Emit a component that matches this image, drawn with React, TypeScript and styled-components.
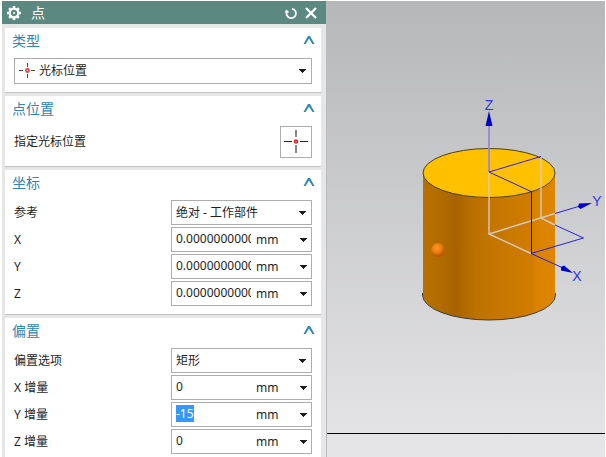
import React, { useEffect, useId, useRef } from "react";
import styled, { createGlobalStyle } from "styled-components";

const GlobalStyle = createGlobalStyle`
  *, *::before, *::after { box-sizing: border-box; }
  body {
    margin: 0;
    background: #fff;
    color: #1e1e1e;
    font: 12px/18px "Noto Sans", "Noto Sans CJK SC", sans-serif;
  }
`;

const Workspace = styled.main`
  display: flex;
  height: 100vh;
  padding: 1px 1px 0 2px;
  overflow: hidden;
`;

const Dialog = styled.section`
  flex: none;
  width: 325px;
  background: #e6e6e6;
  border-right: 1px solid #b9bbbd;
`;

const TitleBar = styled.header`
  display: flex;
  align-items: center;
  height: 23px;
  padding: 0 5px 0 4px;
  background: #5b8880;
  color: #fff;
`;

const Title = styled.h1`
  flex: 1;
  margin: 0 0 0 9px;
  font-size: 14px;
  line-height: 20px;
  font-weight: 400;
`;

const IconButton = styled.button`
  display: grid;
  place-items: center;
  width: 20px;
  height: 20px;
  padding: 0;
  border: 0;
  background: none;
  color: inherit;
`;

const Groups = styled.div`
  display: flex;
  flex-direction: column;
  gap: 3px;
  padding: 4px 5px 0 3px;
`;

const Group = styled.section`
  padding: 0 9px 8px;
  background: #fff;
  border-bottom: 1px solid #c3c3c3;
`;

const GroupHeader = styled.header`
  display: flex;
  align-items: center;
  justify-content: space-between;
  height: 30px;
  margin: 0 -7px 0 -2px;
  padding-bottom: 4px;
`;

const GroupTitle = styled.h2`
  margin: 0;
  color: #2b87b8;
  font-size: 14px;
  line-height: 20px;
  font-weight: 400;
`;

const Rows = styled.div`
  display: grid;
  gap: 2px;
`;

const Row = styled.div`
  display: grid;
  grid-template-columns: 1fr 141px;
  align-items: center;
`;

const PickRow = styled.div`
  display: flex;
  align-items: center;
  justify-content: space-between;
`;

const Label = styled.label`
  white-space: nowrap;
`;

const PickButton = styled.button`
  display: grid;
  place-items: center;
  width: 32px;
  height: 32px;
  padding: 0;
  border: 1px solid #adadad;
  background: #fff;
`;

const Box = styled.div<{ $tall?: boolean }>`
  display: flex;
  align-items: center;
  gap: 4px;
  height: ${(p) => (p.$tall ? 26 : 25)}px;
  padding-left: 4px;
  border: 1px solid #adadad;
  background: #fff;
`;

const SelectCell = styled.div`
  display: grid;
  flex: 1;
  align-items: center;

  > * { grid-area: 1 / 1; }
  > svg { justify-self: end; pointer-events: none; }
`;

const Select = styled.select`
  width: 100%;
  height: 22px;
  padding: 0;
  border: 0;
  outline: 0;
  appearance: none;
  background: none;
  color: inherit;
  font: inherit;
`;

const Input = styled.input`
  width: 75px;
  height: 17px;
  margin: 0 1px 2px 0;
  padding: 0;
  border: 0;
  outline: 0;
  background: none;
  color: inherit;
  font: inherit;
  line-height: 17px;

  &::selection {
    background: rgba(51, 153, 255, 0.996);
    color: #fff;
  }
`;

const Viewport = styled.section`
  flex: 1;
  min-width: 0;
  background: linear-gradient(#b6b7b9, #e6e6e9);
`;

const Scene = styled.svg`
  display: block;
  width: 100%;
  height: 100%;
`;

const DropArrow = ({ inset }: { inset: number }) => (
  <svg width={7 + inset} height="4" shapeRendering="crispEdges" aria-hidden="true">
    <path d="M0 0h7v1h-1v1h-1v1h-1v1h-1v-1h-1v-1h-1v-1h-1z" fill="#1e1e1e" />
  </svg>
);

const Chevron = () => (
  <svg width="12" height="10" viewBox="0 0 12 10" aria-hidden="true">
    <path d="M0.500 8 5 0H7L11.500 8H9.400L6 2.400 2.600 8z" fill="#2b87b8" />
  </svg>
);

const GearIcon = () => (
  <svg width="16" height="16" viewBox="-8 -8 16 16" fill="none" stroke="#fff" aria-hidden="true">
    <circle r="4.4" strokeWidth="2.2" />
    <g strokeWidth="2.6">
      <path d="M0-7V-5M0 7V5M-7 0H-5M7 0H5" />
      <path d="M-4.8-4.8-3.6-3.6M4.8 4.8 3.6 3.6M-4.8 4.8-3.6 3.6M4.8-4.8 3.6-3.6" />
    </g>
    <circle r="1" fill="#fff" stroke="none" />
  </svg>
);

const ResetIcon = () => (
  <svg width="14" height="14" viewBox="0 0 14 14" fill="none" stroke="#fff" strokeWidth="1.8" aria-hidden="true">
    <path d="M8 2.800A4.700 4.700 0 1 1 3 5.500" />
    <path d="M0.500 6.500 2.500 3.500 5.500 6.500z" fill="#fff" stroke="none" />
  </svg>
);

const CloseIcon = () => (
  <svg width="12" height="12" viewBox="0 0 12 12" stroke="#fff" strokeWidth="2.3" aria-hidden="true">
    <path d="M1 1 11 11M11 1 1 11" />
  </svg>
);

const SmallCursorIcon = () => (
  <svg width="16" height="16" viewBox="0 0 16 16" fill="none" aria-hidden="true">
    <path d="M0 7.500H4M12 7.500H16M8.500 0V4M8.500 11V15" stroke="#444" />
    <circle cx="8.500" cy="7.500" r="1.7" stroke="#d4383c" strokeWidth="1.4" fill="#f3b5b5" />
  </svg>
);

const CursorIcon = () => (
  <svg width="24" height="24" viewBox="0 0 24 24" fill="none" aria-hidden="true">
    <path d="M0 11.500H8M16 11.500H24" stroke="#222" />
    <path d="M12 0V7M12 15V23" stroke="#888" strokeWidth="2" />
    <circle cx="12" cy="11.500" r="1.6" stroke="#d82a2e" strokeWidth="1.5" fill="#f08080" />
  </svg>
);

function Section({ title, children }: { title: string; children: React.ReactNode }) {
  return (
    <Group>
      <GroupHeader>
        <GroupTitle>{title}</GroupTitle>
        <IconButton type="button" aria-label={`收起${title}`}>
          <Chevron />
        </IconButton>
      </GroupHeader>
      {children}
    </Group>
  );
}

function OptionRow({ label, value }: { label: string; value: string }) {
  const id = useId();
  return (
    <Row>
      <Label htmlFor={id}>{label}</Label>
      <Box>
        <SelectCell>
          <Select id={id}>
            <option>{value}</option>
          </Select>
          <DropArrow inset={5} />
        </SelectCell>
      </Box>
    </Row>
  );
}

function ValueRow({ label, value, active }: { label: string; value: string; active?: boolean }) {
  const id = useId();
  const input = useRef<HTMLInputElement>(null);
  useEffect(() => {
    if (active) {
      input.current?.focus();
      input.current?.select();
    }
  }, [active]);
  return (
    <Row>
      <Label htmlFor={id}>{label}</Label>
      <Box>
        <Input id={id} ref={input} defaultValue={value} />
        <SelectCell>
          <Select aria-label={`${label} 单位`}>
            <option>mm</option>
          </Select>
          <DropArrow inset={4} />
        </SelectCell>
      </Box>
    </Row>
  );
}

function Model() {
  return (
    <Scene viewBox="327 1 278 456" preserveAspectRatio="xMidYMin meet" overflow="visible" role="img" aria-label="圆柱体模型">
      <defs>
        <linearGradient id="side">
          <stop offset="0" stopColor="#b87000" />
          <stop offset="0.14" stopColor="#b26b00" />
          <stop offset="0.25" stopColor="#a66300" />
          <stop offset="0.4" stopColor="#bd7200" />
          <stop offset="0.65" stopColor="#c97900" />
          <stop offset="0.82" stopColor="#d07d00" />
          <stop offset="0.86" stopColor="#da8300" />
          <stop offset="1" stopColor="#de8600" />
        </linearGradient>
        <radialGradient id="ball" cx="0.42" cy="0.35" r="0.6">
          <stop offset="0" stopColor="#ff9b2c" />
          <stop offset="0.5" stopColor="#f07f10" />
          <stop offset="1" stopColor="#b65800" />
        </radialGradient>
      </defs>
      <path d="M327 433.5H605" stroke="#000" />
      <path d="M423 173V295A66 25 0 0 0 555 295V173z" fill="url(#side)" />
      <path d="M422.5 293V295A66.5 25 0 0 0 555.5 295V293" fill="none" stroke="#3c3a38" />
      <ellipse cx="489" cy="173" rx="66" ry="24.5" fill="#ffc000" stroke="#4a4022" />
      <circle cx="438" cy="250" r="7" fill="url(#ball)" />
      <g fill="none" stroke="#d6c8c4" strokeWidth="1.4">
        <path d="M489 172V234L531 253.5M489 234 555 213.5M541 157V218L555 225" />
      </g>
      <path d="M489 172V124" stroke="#9a86dc" strokeWidth="1.8" />
      <g fill="none" stroke="#2a20e0" strokeWidth="1">
        <path d="M541 156.5 489 172 531 191.5" />
        <path d="M555 213.5 580 206M555 225 583.5 238 531 253.5 562 267.5" />
      </g>
      <path d="M531.5 191V254" stroke="#0c0890" />
      <g fill="#0000c8">
        <path d="M489 111 492.5 126H485.5z" />
        <path d="M592 203 580.5 209 578 207 579 203.5z" />
        <path d="M573 273 561 270.5 561 267 564 265.5z" />
      </g>
      <g fill="#3030e8" fontFamily="Liberation Sans, sans-serif" fontSize="14" textAnchor="middle">
        <text x="489" y="110">Z</text>
        <text x="597" y="206">Y</text>
        <text x="577" y="281">X</text>
      </g>
    </Scene>
  );
}

export default function App() {
  return (
    <>
      <GlobalStyle />
      <Workspace>
        <Dialog aria-label="点">
          <TitleBar>
            <GearIcon />
            <Title>点</Title>
            <IconButton type="button" aria-label="重置">
              <ResetIcon />
            </IconButton>
            <IconButton type="button" aria-label="关闭">
              <CloseIcon />
            </IconButton>
          </TitleBar>
          <Groups>
            <Section title="类型">
              <Box $tall>
                <SmallCursorIcon />
                <SelectCell>
                  <Select aria-label="类型">
                    <option>光标位置</option>
                  </Select>
                  <DropArrow inset={5} />
                </SelectCell>
              </Box>
            </Section>
            <Section title="点位置">
              <PickRow>
                <Label htmlFor="pick">指定光标位置</Label>
                <PickButton id="pick" type="button">
                  <CursorIcon />
                </PickButton>
              </PickRow>
            </Section>
            <Section title="坐标">
              <Rows>
                <OptionRow label="参考" value="绝对 - 工作部件" />
                <ValueRow label="X" value="0.000000000000" />
                <ValueRow label="Y" value="0.000000000000" />
                <ValueRow label="Z" value="0.000000000000" />
              </Rows>
            </Section>
            <Section title="偏置">
              <Rows>
                <OptionRow label="偏置选项" value="矩形" />
                <ValueRow label="X 增量" value="0" />
                <ValueRow label="Y 增量" value="-15" active />
                <ValueRow label="Z 增量" value="0" />
              </Rows>
            </Section>
          </Groups>
        </Dialog>
        <Viewport>
          <Model />
        </Viewport>
      </Workspace>
    </>
  );
}
